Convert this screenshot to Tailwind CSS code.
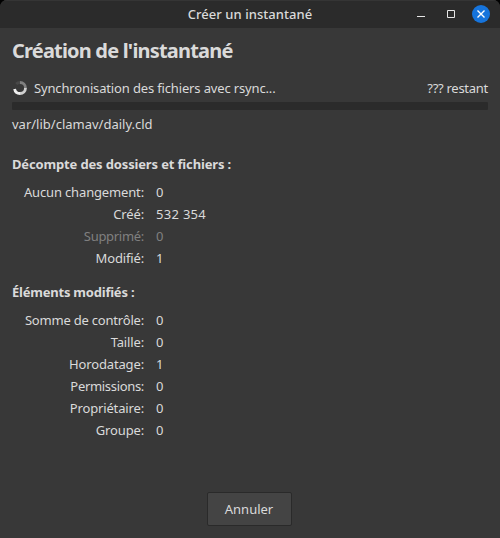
<!DOCTYPE html>
<html lang="fr">
<head>
<meta charset="utf-8">
<title>Créer un instantané</title>
<script src="https://cdn.jsdelivr.net/npm/@tailwindcss/browser@4"></script>
</head>
<body class="bg-black">
<main class="flex h-[538px] w-[500px] flex-col overflow-hidden rounded-t-[7px] bg-[#383838] font-['Noto_Sans',sans-serif] text-[13px] leading-[22px] tracking-[-0.15px] whitespace-nowrap text-[#dadada]">
  <header class="grid h-7 shrink-0 grid-cols-[1fr_auto_1fr] items-center border-t border-[#353535] bg-[#2b2b2b]">
    <span></span>
    <h1 class="-mt-[2px] text-[13px] font-medium tracking-[0.05px]">Créer un instantané</h1>
    <div class="-mt-px flex justify-end gap-3 pr-[10px]">
      <svg class="size-[18px]" viewBox="0 0 18 18"><path d="M5 11.5h8" stroke="#e6e6e6"/></svg>
      <svg class="size-[18px]" viewBox="0 0 18 18"><path d="M5.5 5.5h7v7h-7z" fill="none" stroke="#e6e6e6"/></svg>
      <svg class="size-[18px]" viewBox="0 0 18 18"><circle cx="9" cy="9" r="9" fill="#1674dc"/><path d="m5.5 5.5 7 7m0-7-7 7" stroke="#fff" stroke-width="1.4"/></svg>
    </div>
  </header>
  <section class="flex flex-1 flex-col px-3 pt-2">
    <h2 class="h-8 text-[20px] leading-[30px] font-bold tracking-[-0.81px]">Création de l'instantané</h2>
    <div class="mt-[9px] flex h-[22px] items-center">
      <svg class="mr-[6px] size-4" viewBox="0 0 16 16" fill="none" stroke-width="2.8">
        <path d="M2.6 9A5.5 5.5 0 0 0 8 13.5" stroke="#f0f0f0"/>
        <path d="M8 13.5A5.5 5.5 0 0 0 13.5 8" stroke="#cfcfcf"/>
        <path d="M13.5 8A5.5 5.5 0 0 0 8 2.5" stroke="#808080"/>
        <path d="M8 2.5A5.5 5.5 0 0 0 4.2 4" stroke="#484848"/>
      </svg>
      <span>Synchronisation des fichiers avec rsync...</span>
      <span class="ml-auto tracking-[-0.27px]">??? restant</span>
    </div>
    <div class="mt-[3px] h-2 rounded-[1px] bg-[#2b2b2b]"></div>
    <p class="mt-[3px] tracking-normal">var/lib/clamav/daily.cld</p>
    <h3 class="mt-[18px] font-bold">Décompte des dossiers et fichiers :</h3>
    <dl class="mt-[6px] grid grid-cols-[132px_auto] gap-x-3">
      <dt class="text-right">Aucun changement:</dt><dd>0</dd>
      <dt class="text-right">Créé:</dt><dd class="tracking-[0.3px]">532 354</dd>
      <dt class="text-right tracking-[-0.3px] text-[#808080]">Supprimé:</dt><dd class="text-[#808080]">0</dd>
      <dt class="text-right">Modifié:</dt><dd>1</dd>
    </dl>
    <h3 class="mt-3 font-bold tracking-[-0.22px]">Éléments modifiés :</h3>
    <dl class="mt-[6px] grid grid-cols-[132px_auto] gap-x-3">
      <dt class="text-right tracking-[-0.2px]">Somme de contrôle:</dt><dd>0</dd>
      <dt class="text-right">Taille:</dt><dd>0</dd>
      <dt class="text-right">Horodatage:</dt><dd>1</dd>
      <dt class="text-right tracking-[-0.32px]">Permissions:</dt><dd>0</dd>
      <dt class="text-right">Propriétaire:</dt><dd>0</dd>
      <dt class="text-right">Groupe:</dt><dd>0</dd>
    </dl>
    <button class="mt-auto mb-3 -ml-[2px] h-[34px] w-[85px] self-center rounded-[2px] border border-[#2a2a2a] bg-[#444444] tracking-normal">Annuler</button>
  </section>
</main>
</body>
</html>
